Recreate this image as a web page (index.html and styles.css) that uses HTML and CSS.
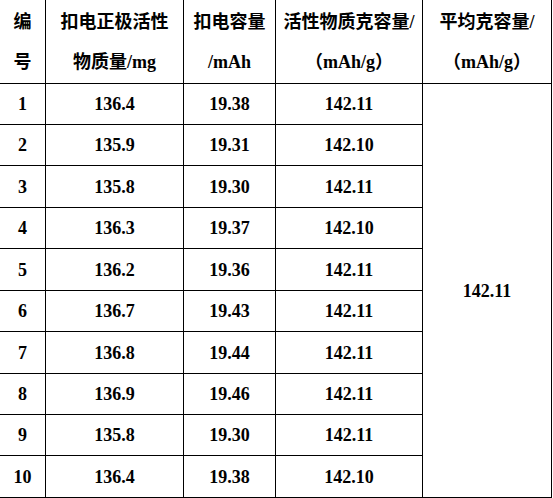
FILE: index.html
```html
<!DOCTYPE html>
<html>
<head>
<meta charset="utf-8">
<title>扣电测试</title>
<link rel="stylesheet" href="styles.css">
</head>
<body>
<div class="sheet">
  <div class="cell head">编<br>号</div>
  <div class="cell head">扣电正极活性<br>物质量/mg</div>
  <div class="cell head">扣电容量<br>/mAh</div>
  <div class="cell head">活性物质克容量/<br>（mAh/g）</div>
  <div class="cell head">平均克容量/<br>（mAh/g）</div>

  <div class="cell">1</div><div class="cell">136.4</div><div class="cell">19.38</div><div class="cell">142.11</div>
  <div class="cell avg">142.11</div>
  <div class="cell">2</div><div class="cell">135.9</div><div class="cell">19.31</div><div class="cell">142.10</div>
  <div class="cell">3</div><div class="cell">135.8</div><div class="cell">19.30</div><div class="cell">142.11</div>
  <div class="cell">4</div><div class="cell">136.3</div><div class="cell">19.37</div><div class="cell">142.10</div>
  <div class="cell">5</div><div class="cell">136.2</div><div class="cell">19.36</div><div class="cell">142.11</div>
  <div class="cell">6</div><div class="cell">136.7</div><div class="cell">19.43</div><div class="cell">142.11</div>
  <div class="cell">7</div><div class="cell">136.8</div><div class="cell">19.44</div><div class="cell">142.11</div>
  <div class="cell">8</div><div class="cell">136.9</div><div class="cell">19.46</div><div class="cell">142.11</div>
  <div class="cell">9</div><div class="cell">135.8</div><div class="cell">19.30</div><div class="cell">142.11</div>
  <div class="cell">10</div><div class="cell">136.4</div><div class="cell">19.38</div><div class="cell">142.10</div>
</div>
</body>
</html>
```
FILE: styles.css
```css
html, body {
  margin: 0;
  padding: 0;
  background: #fff;
}

.sheet {
  display: grid;
  grid-template-columns: 46px 138px 92px 147px 129px;
  grid-template-rows: 84px 41px 41px 42px 41px 42px 41px 42px 41px 41px 42px;
  width: 552px;
  font-family: "Liberation Serif", "Noto Sans CJK SC", serif;
  font-weight: 700;
  font-size: 18px;
  color: #000;
}

.cell {
  box-sizing: border-box;
  border-right: 1px solid #000;
  border-bottom: 1px solid #000;
  display: flex;
  align-items: center;
  justify-content: center;
  text-align: center;
  line-height: 20px;
}

.head {
  line-height: 40px;
}

.avg {
  grid-column: 5;
  grid-row: 2 / span 10;
}
```
